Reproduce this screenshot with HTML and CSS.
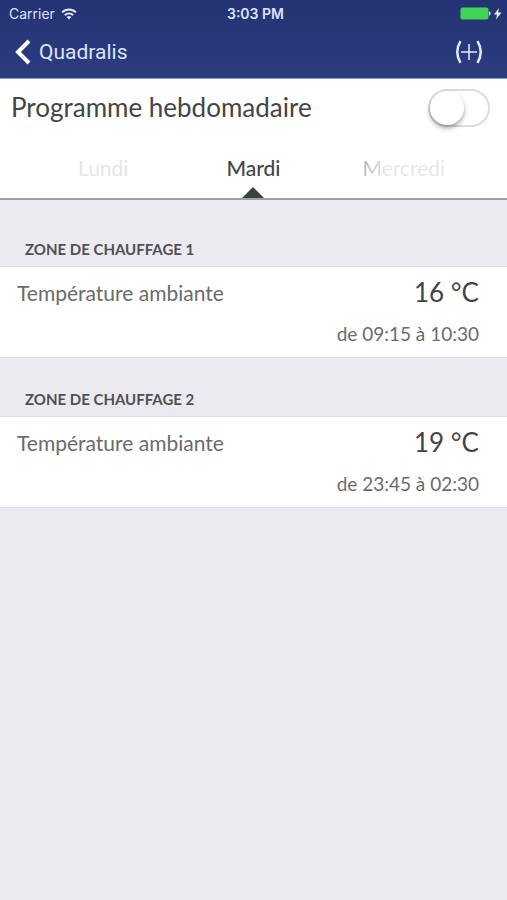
FILE: index.html
```html
<!DOCTYPE html>
<html lang="fr">
<head>
    <meta charset="utf-8">
    <meta name="viewport" content="width=device-width, initial-scale=1">
    <title>Quadralis</title>
    <link rel="stylesheet" href="styles.css">
</head>
<body>

    <header class="topbar">
        <div class="status">
            <div class="carrier">
                <span>Carrier</span>
                <svg class="wifi" viewBox="0 0 16 12" width="16" height="12">
                    <path d="M1.2 4.3 C5 0.5 11 0.5 14.8 4.3" />
                    <path d="M3.8 7.1 C6.2 4.8 9.8 4.8 12.2 7.1" />
                    <path class="dot" d="M5.6 9 Q8 7 10.4 9 L8 11.5 Z" />
                </svg>
            </div>
            <div class="clock">3:03 PM</div>
            <div class="power">
                <svg viewBox="0 0 42 14" width="42" height="14">
                    <rect x="0.5" y="0.5" width="28" height="12" rx="2" fill="#42d552" />
                    <path d="M29 4 Q32.5 6.5 29 9 Z" fill="#c8d2f0" />
                    <path d="M39 1 L34 7.5 H37 L36 12.5 L41.5 5.6 H38.2 Z" fill="#e4eaff" />
                </svg>
            </div>
        </div>
        <nav class="navbar">
            <a class="back" href="#">
                <svg viewBox="0 0 16 26" width="16" height="26">
                    <path d="M14 2 L3 13 L14 24" />
                </svg>
                <span>Quadralis</span>
            </a>
            <button class="add" type="button" aria-label="Ajouter">
                <svg viewBox="0 0 28 24" width="28" height="24">
                    <path d="M5.5 1.2 Q-1 12 5.5 22.8" />
                    <path d="M22.5 1.2 Q29 12 22.5 22.8" />
                    <path class="plus" d="M14 4 V20 M6 12 H22" />
                </svg>
            </button>
        </nav>
    </header>

    <section class="program">
        <div class="program-row">
            <label for="weekly">Programme hebdomadaire</label>
            <input class="switch" type="checkbox" id="weekly" role="switch">
        </div>
        <div class="days">
            <button class="day" type="button">Lundi</button>
            <button class="day active" type="button">Mardi</button>
            <button class="day next" type="button">Mercredi</button>
        </div>
    </section>

    <main>
        <section class="zone">
            <h2>ZONE DE CHAUFFAGE 1</h2>
            <div class="cell">
                <div class="cell-row">
                    <span class="name">Température ambiante</span>
                    <span class="temp">16 °C</span>
                </div>
                <p class="hours">de 09:15 à 10:30</p>
            </div>
        </section>
        <section class="zone">
            <h2>ZONE DE CHAUFFAGE 2</h2>
            <div class="cell">
                <div class="cell-row">
                    <span class="name">Température ambiante</span>
                    <span class="temp">19 °C</span>
                </div>
                <p class="hours">de 23:45 à 02:30</p>
            </div>
        </section>
    </main>

</body>
</html>
```

FILE: styles.css
```css
* {
    box-sizing: border-box;
}
body {
    margin: 0;
    background-color: #ebeaf0;
    font-family: Lato, "Liberation Sans", sans-serif;
    color: #444546;
}
button {
    border: 0;
    padding: 0;
    background: none;
    font: inherit;
    cursor: pointer;
}

/* top bar */
.topbar {
    background: linear-gradient(#243373, #2b3c80);
    color: #dce4fc;
    border-bottom: 1px solid #8798c6;
}
.status {
    display: grid;
    grid-template-columns: 1fr auto 1fr;
    align-items: center;
    height: 27px;
    padding: 0 5px 0 9px;
    font-family: Inter, sans-serif;
    font-size: 14px;
}
.carrier {
    display: flex;
    align-items: center;
    gap: 6px;
}
.wifi {
    fill: none;
    stroke: #e4eaff;
    stroke-width: 2;
}
.wifi .dot {
    fill: #e4eaff;
    stroke: none;
}
.clock {
    font-weight: 600;
}
.power {
    display: flex;
    justify-content: flex-end;
}
.navbar {
    display: flex;
    justify-content: space-between;
    align-items: center;
    height: 51px;
    padding: 0 24px 1px 15px;
}
.back {
    display: flex;
    align-items: center;
    gap: 8px;
    color: inherit;
    text-decoration: none;
    font-family: Roboto, sans-serif;
    font-size: 21px;
}
.back svg {
    fill: none;
    stroke: #fff;
    stroke-width: 4;
}
.add {
    display: flex;
}
.add svg {
    fill: none;
    stroke: #e4eaff;
    stroke-width: 2.5;
}
.add .plus {
    stroke-width: 1.5;
}

/* weekly program */
.program {
    background-color: #fff;
    border-bottom: 2px solid #a0a1a4;
}
.program-row {
    display: flex;
    justify-content: space-between;
    align-items: center;
    height: 58px;
    padding: 0 17px 0 11px;
    font-size: 26px;
}
.program-row label {
    padding-bottom: 2px;
}
.switch {
    appearance: none;
    display: flex;
    width: 62px;
    height: 38px;
    margin: 0;
    border: 2px solid #dcdcdc;
    border-radius: 19px;
    background-color: #fff;
    cursor: pointer;
}
.switch::before {
    content: "";
    width: 34px;
    height: 34px;
    border-radius: 50%;
    background-color: #fff;
    box-shadow: 0 3px 5px rgba(0, 0, 0, 0.35);
}
.switch:checked {
    justify-content: flex-end;
    background-color: #42d552;
}
.days {
    display: grid;
    grid-template-columns: 1fr 1fr 1fr;
    height: 61px;
    padding: 0 28px;
    font-size: 21px;
}
.day {
    padding-bottom: 1px;
    color: #e6e6e6;
}
.day.active {
    position: relative;
    color: #444546;
    font-weight: 500;
}
.day.active::after {
    content: "";
    position: absolute;
    left: 50%;
    bottom: 0;
    margin-left: -11px;
    border: 11px solid transparent;
    border-top: 0;
    border-bottom-color: #3b4143;
}
.day.next {
    background: linear-gradient(90deg, #b4b4b4 22%, #e6e6e6 38%);
    background-clip: text;
    -webkit-background-clip: text;
    color: transparent;
}

/* heating zones */
.zone h2 {
    margin: 0;
    padding: 31px 25px 7px;
    font-size: 15px;
    line-height: 20px;
    font-weight: 700;
    color: #505055;
}
.zone:first-child h2 {
    padding-top: 39px;
}
.cell {
    background-color: #fff;
    border-top: 1px solid #dedee3;
    border-bottom: 1px solid #dedee3;
    padding: 7px 28px 11px 17px;
}
.cell-row {
    display: flex;
    justify-content: space-between;
    align-items: center;
}
.name {
    font-size: 21px;
    color: #6b6b6b;
}
.temp {
    font-size: 26px;
    line-height: 36px;
}
.hours {
    margin: 11px 0 0;
    font-size: 19px;
    line-height: 25px;
    text-align: right;
    color: #6b6b6b;
}
```
